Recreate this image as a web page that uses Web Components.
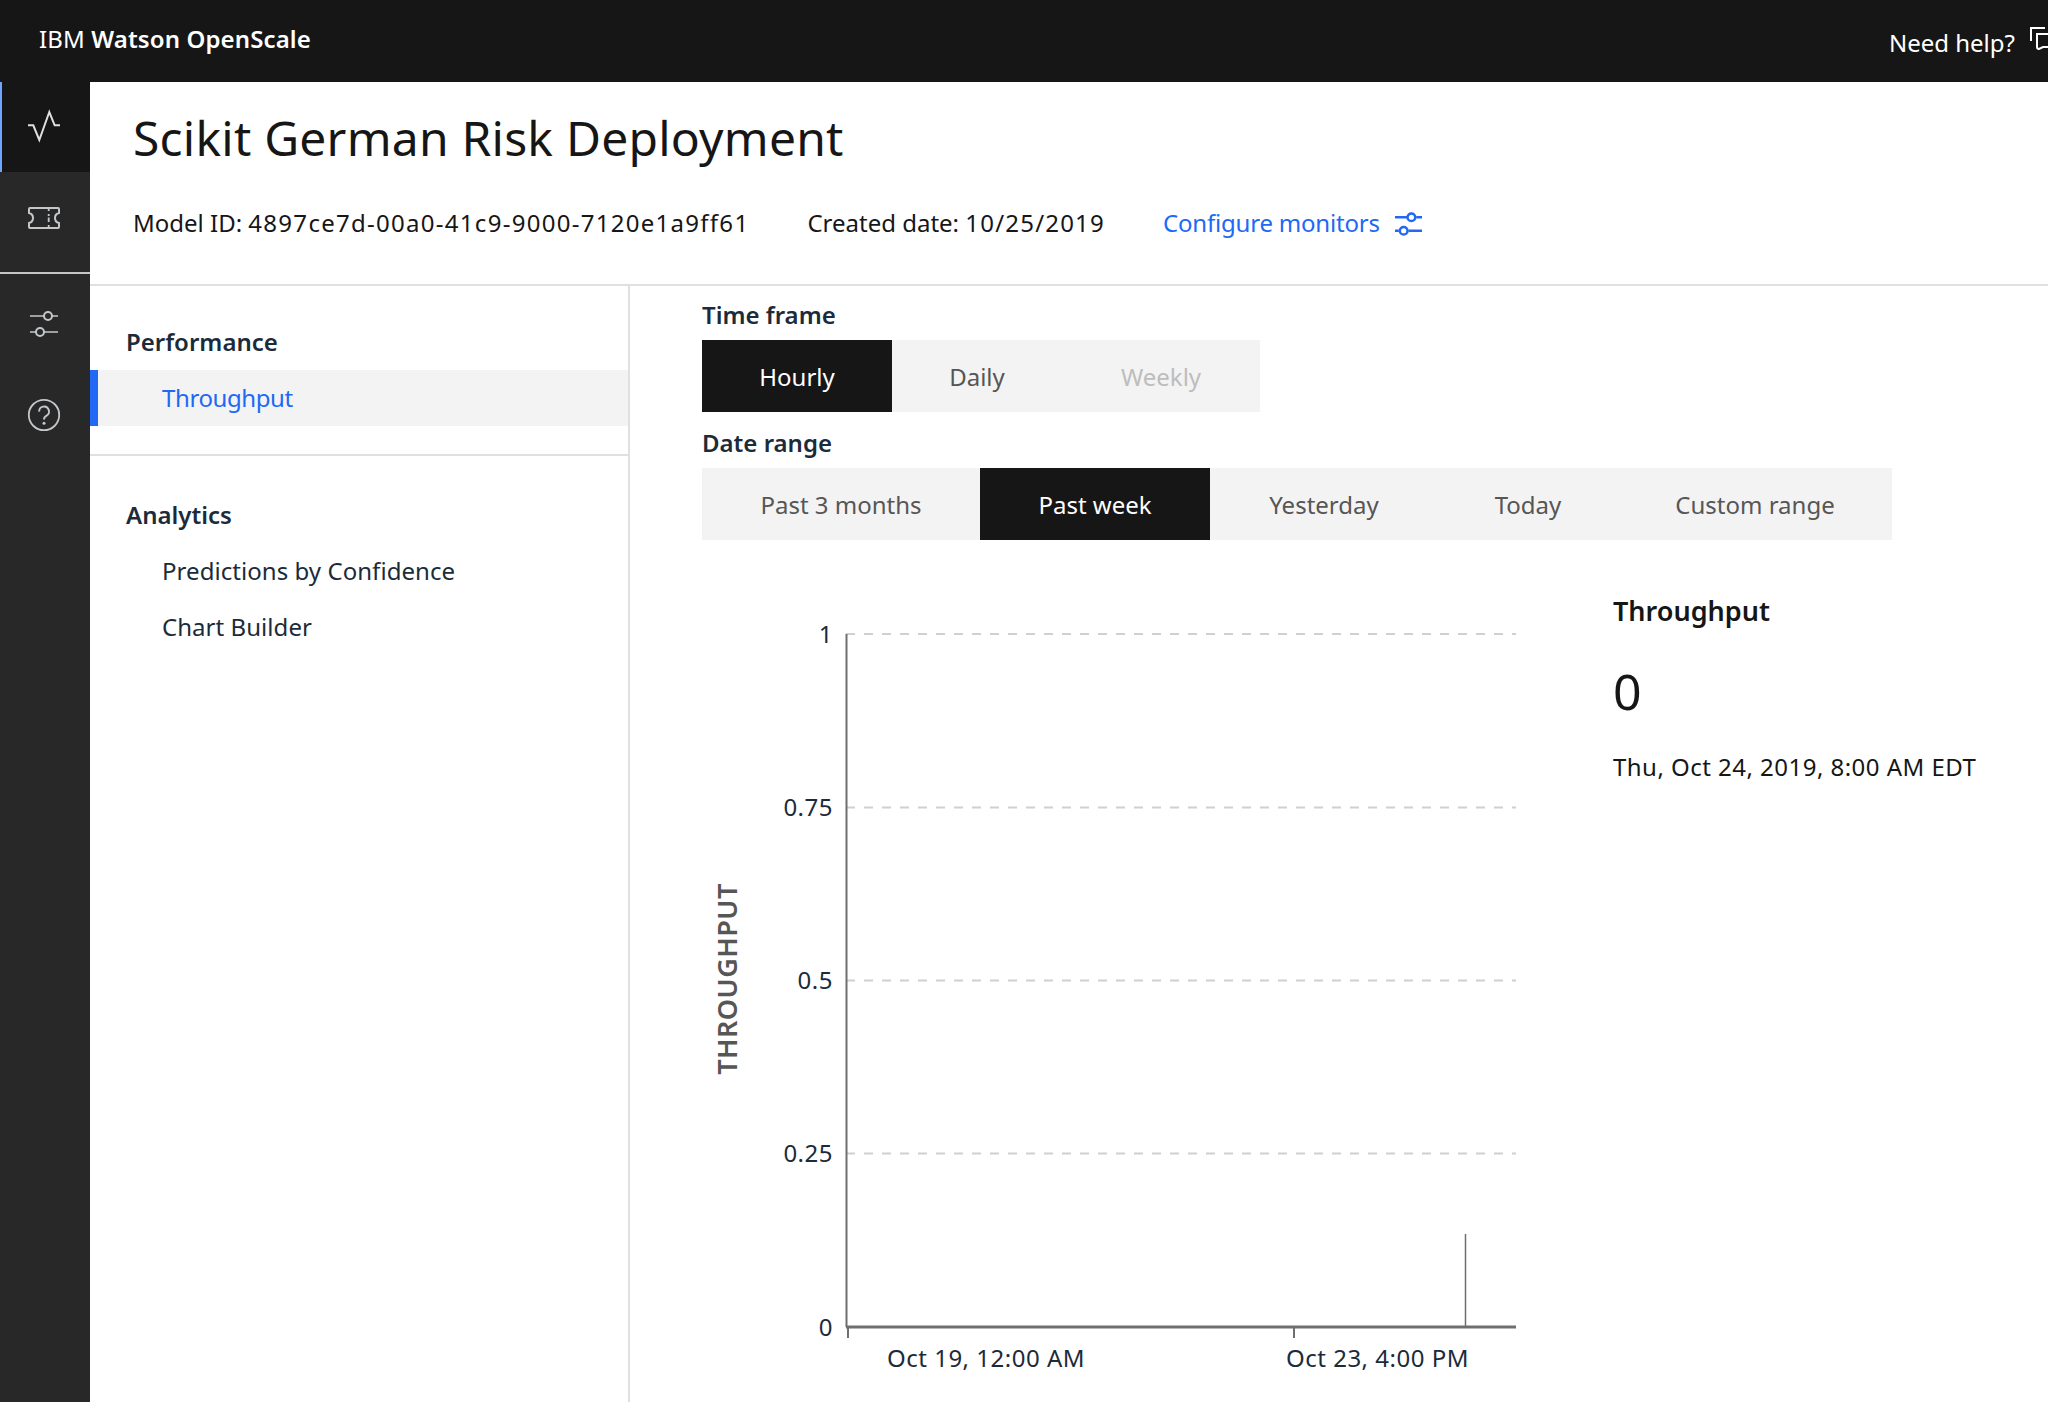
<!DOCTYPE html>
<html lang="en">
<head>
<meta charset="utf-8">
<title>IBM Watson OpenScale</title>
<style>
  html, body { margin: 0; height: 100%; overflow: hidden; background: #fff; }
  body { font-family: "Noto Sans", "Liberation Sans", sans-serif; color: #161616; }
</style>
</head>
<body>
<app-shell>
  <app-header slot="header"></app-header>
  <side-rail slot="rail">
    <rail-item icon="activity" active></rail-item>
    <rail-item icon="ticket" divided></rail-item>
    <rail-item icon="sliders" style="height:100px"></rail-item>
    <rail-item icon="help" style="height:82px"></rail-item>
  </side-rail>
  <page-title slot="title"></page-title>
  <nav-panel slot="nav">
    <nav-group label="Performance" divided>
      <nav-item active>Throughput</nav-item>
    </nav-group>
    <nav-group label="Analytics">
      <nav-item>Predictions by Confidence</nav-item>
      <nav-item>Chart Builder</nav-item>
    </nav-group>
  </nav-panel>
  <monitor-view slot="main">
    <seg-group label="Time frame" widths="190 170 198">
      <seg-btn active>Hourly</seg-btn>
      <seg-btn>Daily</seg-btn>
      <seg-btn disabled>Weekly</seg-btn>
    </seg-group>
    <seg-group label="Date range" widths="278 230 228 180 274">
      <seg-btn>Past 3 months</seg-btn>
      <seg-btn active>Past week</seg-btn>
      <seg-btn>Yesterday</seg-btn>
      <seg-btn>Today</seg-btn>
      <seg-btn>Custom range</seg-btn>
    </seg-group>
    <div class="chart-row" style="display:flex">
      <throughput-chart></throughput-chart>
      <stat-panel></stat-panel>
    </div>
  </monitor-view>
</app-shell>

<script>
  // иконки боковой панели
  const icons = {
    activity: '<path d="M2 16.3 H7.3 L13.3 31 L23.3 3 L28.7 16.3 H34" fill="none" stroke="currentColor" stroke-width="2"/>',
    ticket: '<path d="M4 8 H32 Q33 8 33 9 V13 Q29 14 29 18 Q29 22 33 23 V27 Q33 28 32 28 H4 Q3 28 3 27 V23 Q7 22 7 18 Q7 14 3 13 V9 Q3 8 4 8 Z" fill="none" stroke="currentColor" stroke-width="2"/><path d="M22.7 8 V11 M22.7 14 V16 M22.7 17.5 V22 M22.7 25 V28" fill="none" stroke="currentColor" stroke-width="1.8"/>',
    sliders: '<g fill="none" stroke="currentColor"><path d="M4 10 H18 M26 10 H32 M4 26 H10 M18 26 H32" stroke-width="1.7"/><circle cx="22" cy="10" r="4" stroke-width="2"/><circle cx="14" cy="26" r="4" stroke-width="2"/></g>',
    help: '<circle cx="18" cy="18" r="15.2" fill="none" stroke="currentColor" stroke-width="1.8"/><path d="M13.2 14.6 A4.9 4.9 0 1 1 20.6 18.6 Q18 20 18 22.4" fill="none" stroke="currentColor" stroke-width="1.9"/><circle cx="18" cy="26.2" r="1.5" fill="currentColor"/>'
  };

  const define = (name, css, html, extra = {}) => {
    customElements.define(name, class extends HTMLElement {
      constructor() {
        super();
        this.attachShadow({ mode: 'open' });
        this.shadowRoot.innerHTML = `<style>${css}</style>${html}`;
      }
      connectedCallback() {
        if (extra.connected) extra.connected.call(this);
      }
    });
  };

  // общий каркас страницы
  define('app-shell', `
    :host { display: grid; grid-template-columns: 90px 540px 1fr; grid-template-rows: 82px 204px 1fr; height: 1402px; overflow: hidden; }
    .header { grid-column: 1 / 4; }
    .rail { grid-column: 1; grid-row: 2 / 4; }
    .title { grid-column: 2 / 4; grid-row: 2; }
    .nav { grid-column: 2; grid-row: 3; }
    .main { grid-column: 3; grid-row: 3; min-width: 0; }
  `, `
    <div class="header"><slot name="header"></slot></div>
    <div class="rail"><slot name="rail"></slot></div>
    <div class="title"><slot name="title"></slot></div>
    <div class="nav"><slot name="nav"></slot></div>
    <div class="main"><slot name="main"></slot></div>
  `);

  define('app-header', `
    :host { display: flex; align-items: center; justify-content: space-between; height: 82px; background: #161616; color: #fff; font-size: 24px; overflow: hidden; }
    .brand { margin-left: 39px; letter-spacing: .12px; margin-top: -6px; }
    .brand b { font-weight: 600; }
    .help { display: flex; align-items: center; margin-right: -13px; margin-top: 2px; }
    .help svg { margin-left: 14px; }
  `, `
    <div class="brand">IBM <b>Watson OpenScale</b></div>
    <div class="help">Need help?
      <svg width="32" height="32" viewBox="0 0 32 32" fill="none" stroke="#fff" stroke-width="2"><path d="M2 15 V2 H16"/><path d="M8 8 H24 Q26 8 26 10 V21 H14 L10 23 Q8 23 8 21 Z"/></svg>
    </div>
  `);

  define('side-rail', `
    :host { display: flex; flex-direction: column; height: 100%; background: #282828; }
  `, `<slot></slot>`);

  define('rail-item', `
    :host { display: flex; align-items: center; justify-content: center; height: 90px; box-sizing: border-box; padding-right: 2px; color: #c4c7ca; }
    :host([active]) { background: #161616; color: #e0e0e0; box-shadow: inset 2px 0 0 #6ea6ff; }
    :host([divided]) { height: 102px; align-items: flex-start; padding-top: 28px; border-bottom: 2px solid #c6c6c6; }
    svg { width: 36px; height: 36px; display: block; }
  `, `<svg viewBox="0 0 36 36"></svg>`, {
    connected() {
      this.shadowRoot.querySelector('svg').innerHTML = icons[this.getAttribute('icon')];
    }
  });

  define('page-title', `
    :host { display: block; height: 204px; box-sizing: border-box; padding: 27px 0 0 43px; border-bottom: 2px solid #e0e0e0; }
    h1 { margin: 0; font-size: 48px; line-height: 58px; font-weight: 400; letter-spacing: .22px; }
    .meta { display: flex; align-items: center; margin-top: 40px; font-size: 24px; line-height: 32px; }
    .id b, .created b { font-weight: 400; }
    .id b { letter-spacing: 1.28px; }
    .created { margin-left: 58px; }
    .created b { letter-spacing: 1.2px; }
    .link { display: flex; align-items: center; margin-left: 58px; color: #2168f5; letter-spacing: -.2px; }
    svg { margin-left: 15px; margin-top: 2px; }
  `, `
    <h1>Scikit German Risk Deployment</h1>
    <div class="meta">
      <span class="id">Model ID: <b>4897ce7d-00a0-41c9-9000-7120e1a9ff61</b></span>
      <span class="created">Created date: <b>10/25/2019</b></span>
      <span class="link">Configure monitors
        <svg width="27" height="26" viewBox="0 0 28 26" fill="none" stroke="#2168f5" stroke-width="2.6"><path d="M0 6 H13 M22 6 H28 M0 20 H4 M14 20 H28"/><circle cx="17" cy="6" r="4"/><circle cx="9" cy="20" r="4"/></svg>
      </span>
    </div>
  `);

  define('nav-panel', `
    :host { display: block; height: 100%; box-sizing: border-box; border-right: 2px solid #e0e0e0; padding-top: 28px; }
  `, `<slot></slot>`);

  define('nav-group', `
    :host { display: block; }
    :host([divided]) { border-bottom: 2px solid #e0e0e0; padding-bottom: 28px; margin-bottom: 31px; }
    .label { padding-left: 36px; font-size: 24px; line-height: 56px; font-weight: 600; color: #1c2b39; }
  `, `<div class="label"></div><slot></slot>`, {
    connected() {
      this.shadowRoot.querySelector('.label').textContent = this.getAttribute('label');
    }
  });

  define('nav-item', `
    :host { display: block; height: 56px; line-height: 56px; padding-left: 72px; font-size: 24px; color: #1c2b39; letter-spacing: .05px; }
    :host([active]) { padding-left: 64px; background: #f3f3f3; border-left: 8px solid #2168f5; color: #2168f5; letter-spacing: -.4px; }
  `, `<slot></slot>`);

  define('monitor-view', `
    :host { display: block; padding: 10px 0 0 72px; }
  `, `<slot></slot>`);

  define('seg-group', `
    :host { display: block; margin-bottom: 12px; }
    .label { font-size: 24px; line-height: 38px; font-weight: 600; color: #1c2b39; margin-bottom: 6px; }
    .btns { display: flex; background: #f3f3f3; height: 72px; width: max-content; }
  `, `<div class="label"></div><div class="btns"><slot></slot></div>`, {
    connected() {
      this.shadowRoot.querySelector('.label').textContent = this.getAttribute('label');
      const widths = this.getAttribute('widths').split(' ');
      [...this.children].forEach((btn, i) => { btn.style.width = widths[i] + 'px'; });
    }
  });

  define('seg-btn', `
    :host { display: flex; align-items: center; justify-content: center; box-sizing: border-box; height: 72px; font-size: 24px; color: #565656; }
    :host([active]) { background: #161616; color: #fff; }
    :host([disabled]) { color: #bdbdbd; }
  `, `<slot></slot>`);

  define('throughput-chart', `
    :host { display: block; width: 911px; height: 825px; margin-top: 25px; flex: none; }
    svg { display: block; font-family: "Noto Sans", "Liberation Sans", sans-serif; }
    .tick { font-size: 24px; fill: #1c2b39; letter-spacing: .5px; }
    .axis-title { font-size: 27px; font-weight: 600; fill: #565656; letter-spacing: .5px; }
  `, `
    <svg width="911" height="825" viewBox="0 0 911 825">
      <g stroke="#d0d0d0" stroke-width="2" stroke-dasharray="9 9">
        <line x1="144" x2="814" y1="57" y2="57"/>
        <line x1="144" x2="814" y1="230.5" y2="230.5"/>
        <line x1="144" x2="814" y1="403.5" y2="403.5"/>
        <line x1="144" x2="814" y1="576.5" y2="576.5"/>
      </g>
      <g stroke="#6f6f6f" fill="none">
        <line x1="144.5" x2="144.5" y1="57" y2="750" stroke-width="2"/>
        <line x1="144" x2="814" y1="750" y2="750" stroke-width="3"/>
        <line x1="146" x2="146" y1="750" y2="761" stroke-width="2"/>
        <line x1="592" x2="592" y1="750" y2="761" stroke-width="2"/>
        <line x1="763.5" x2="763.5" y1="657" y2="750" stroke-width="1.5"/>
      </g>
      <g class="tick" text-anchor="end">
        <text x="131" y="66">1</text>
        <text x="131" y="239">0.75</text>
        <text x="131" y="412">0.5</text>
        <text x="131" y="585">0.25</text>
        <text x="131" y="759">0</text>
      </g>
      <g class="tick">
        <text x="185" y="790">Oct 19, 12:00 AM</text>
        <text x="584" y="790">Oct 23, 4:00 PM</text>
      </g>
      <text class="axis-title" transform="translate(35 402) rotate(-90)" text-anchor="middle">THROUGHPUT</text>
    </svg>
  `);

  define('stat-panel', `
    :host { display: block; margin-top: 39px; font-size: 24px; white-space: nowrap; }
    h2 { margin: 0; font-size: 27px; line-height: 40px; font-weight: 600; }
    .value { font-size: 50px; line-height: 60px; margin-top: 30px; }
    .time { margin-top: 30px; line-height: 32px; letter-spacing: .47px; }
  `, `
    <h2>Throughput</h2>
    <div class="value">0</div>
    <div class="time">Thu, Oct 24, 2019, 8:00 AM EDT</div>
  `);
</script>
</body>
</html>
